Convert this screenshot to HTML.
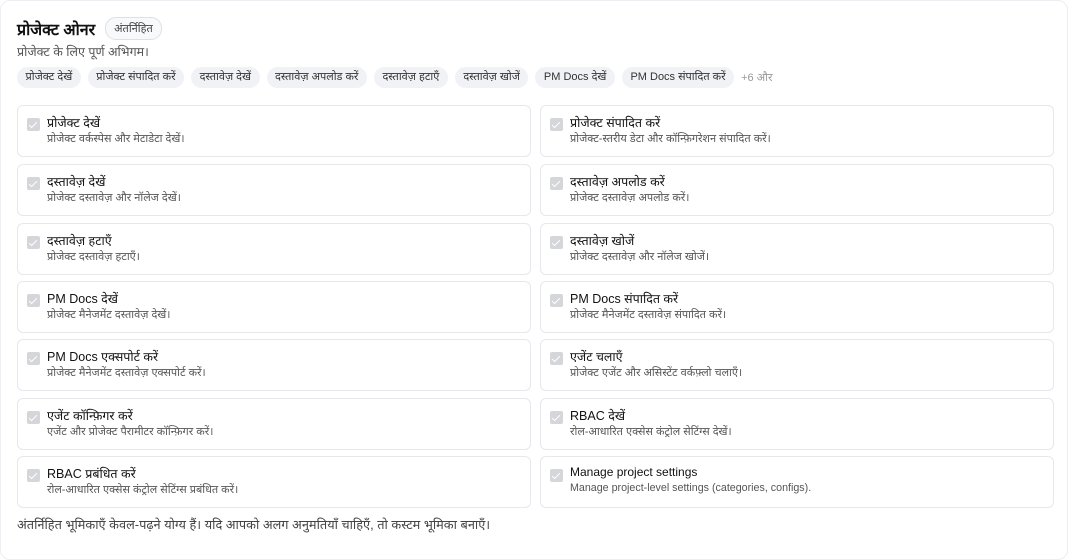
<!DOCTYPE html>
<html><head><meta charset="utf-8"><style>
*{box-sizing:border-box;margin:0;padding:0}
body{width:1070px;height:547px;background:#fff;font-family:"Liberation Sans",sans-serif;color:#111;overflow:hidden;position:relative}
.outer{position:absolute;left:0;top:0;width:1068px;height:560px;border:1px solid #eceef1;border-radius:10px}
.title{position:absolute;left:17px;top:17px;display:flex;align-items:center;gap:10px}
.title h1{font-size:16px;font-weight:bold}
.badge{font-size:11px;color:#444;border:1px solid #dde1e6;border-radius:11px;padding:3px 8px;background:#f8f9fb}
.sub{position:absolute;left:17px;top:43px;font-size:12.5px;color:#555}
.chips{position:absolute;left:17px;top:67px;display:flex;gap:7px;align-items:center}
.chip{background:#f0f2f5;border-radius:11px;font-size:11px;color:#333;padding:0 8.5px;height:21px;line-height:21px;white-space:nowrap}
.more{font-size:11px;color:#999}
.card{position:absolute;width:514px;height:52px;border:1px solid #e6e8eb;border-radius:6px}
.cb{position:absolute;left:9px;top:12px;width:13px;height:13px;background:#d4d6d9;border-radius:2px}
.cb:after{content:"";position:absolute;left:4px;top:1.5px;width:3px;height:7px;border:solid #fff;border-width:0 1.6px 1.6px 0;transform:rotate(45deg)}
.t{position:absolute;left:29px;top:8px;font-size:12.5px;color:#111;white-space:nowrap}
.t.l{font-size:12px}
.d{position:absolute;left:29px;top:25px;font-size:11px;color:#555;white-space:nowrap}
.d.l{font-size:10.7px}
.foot{position:absolute;left:17px;top:515px;font-size:12.8px;color:#444}
</style></head><body>
<div class="outer"></div>
<div class="title"><h1>प्रोजेक्ट ओनर</h1><span class="badge">अंतर्निहित</span></div>
<div class="sub">प्रोजेक्ट के लिए पूर्ण अभिगम।</div>
<div class="chips">
<span class="chip">प्रोजेक्ट देखें</span><span class="chip">प्रोजेक्ट संपादित करें</span><span class="chip">दस्तावेज़ देखें</span><span class="chip">दस्तावेज़ अपलोड करें</span><span class="chip">दस्तावेज़ हटाएँ</span><span class="chip">दस्तावेज़ खोजें</span><span class="chip">PM Docs देखें</span><span class="chip">PM Docs संपादित करें</span><span class="more">+6 और</span>
</div>

<div class="card" style="left:17px;top:105px"><div class="cb"></div><div class="t">प्रोजेक्ट देखें</div><div class="d">प्रोजेक्ट वर्कस्पेस और मेटाडेटा देखें।</div></div>
<div class="card" style="left:540px;top:105px"><div class="cb"></div><div class="t">प्रोजेक्ट संपादित करें</div><div class="d">प्रोजेक्ट-स्तरीय डेटा और कॉन्फ़िगरेशन संपादित करें।</div></div>
<div class="card" style="left:17px;top:164px"><div class="cb"></div><div class="t">दस्तावेज़ देखें</div><div class="d">प्रोजेक्ट दस्तावेज़ और नॉलेज देखें।</div></div>
<div class="card" style="left:540px;top:164px"><div class="cb"></div><div class="t">दस्तावेज़ अपलोड करें</div><div class="d">प्रोजेक्ट दस्तावेज़ अपलोड करें।</div></div>
<div class="card" style="left:17px;top:223px"><div class="cb"></div><div class="t">दस्तावेज़ हटाएँ</div><div class="d">प्रोजेक्ट दस्तावेज़ हटाएँ।</div></div>
<div class="card" style="left:540px;top:223px"><div class="cb"></div><div class="t">दस्तावेज़ खोजें</div><div class="d">प्रोजेक्ट दस्तावेज़ और नॉलेज खोजें।</div></div>
<div class="card" style="left:17px;top:281px"><div class="cb"></div><div class="t">PM Docs देखें</div><div class="d">प्रोजेक्ट मैनेजमेंट दस्तावेज़ देखें।</div></div>
<div class="card" style="left:540px;top:281px"><div class="cb"></div><div class="t">PM Docs संपादित करें</div><div class="d">प्रोजेक्ट मैनेजमेंट दस्तावेज़ संपादित करें।</div></div>
<div class="card" style="left:17px;top:339px"><div class="cb"></div><div class="t">PM Docs एक्सपोर्ट करें</div><div class="d">प्रोजेक्ट मैनेजमेंट दस्तावेज़ एक्सपोर्ट करें।</div></div>
<div class="card" style="left:540px;top:339px"><div class="cb"></div><div class="t">एजेंट चलाएँ</div><div class="d">प्रोजेक्ट एजेंट और असिस्टेंट वर्कफ़्लो चलाएँ।</div></div>
<div class="card" style="left:17px;top:398px"><div class="cb"></div><div class="t">एजेंट कॉन्फ़िगर करें</div><div class="d">एजेंट और प्रोजेक्ट पैरामीटर कॉन्फ़िगर करें।</div></div>
<div class="card" style="left:540px;top:398px"><div class="cb"></div><div class="t">RBAC देखें</div><div class="d">रोल-आधारित एक्सेस कंट्रोल सेटिंग्स देखें।</div></div>
<div class="card" style="left:17px;top:456px"><div class="cb"></div><div class="t">RBAC प्रबंधित करें</div><div class="d">रोल-आधारित एक्सेस कंट्रोल सेटिंग्स प्रबंधित करें।</div></div>
<div class="card" style="left:540px;top:456px"><div class="cb"></div><div class="t l">Manage project settings</div><div class="d l">Manage project-level settings (categories, configs).</div></div>

<div class="foot">अंतर्निहित भूमिकाएँ केवल-पढ़ने योग्य हैं। यदि आपको अलग अनुमतियाँ चाहिएँ, तो कस्टम भूमिका बनाएँ।</div>
</body></html>
